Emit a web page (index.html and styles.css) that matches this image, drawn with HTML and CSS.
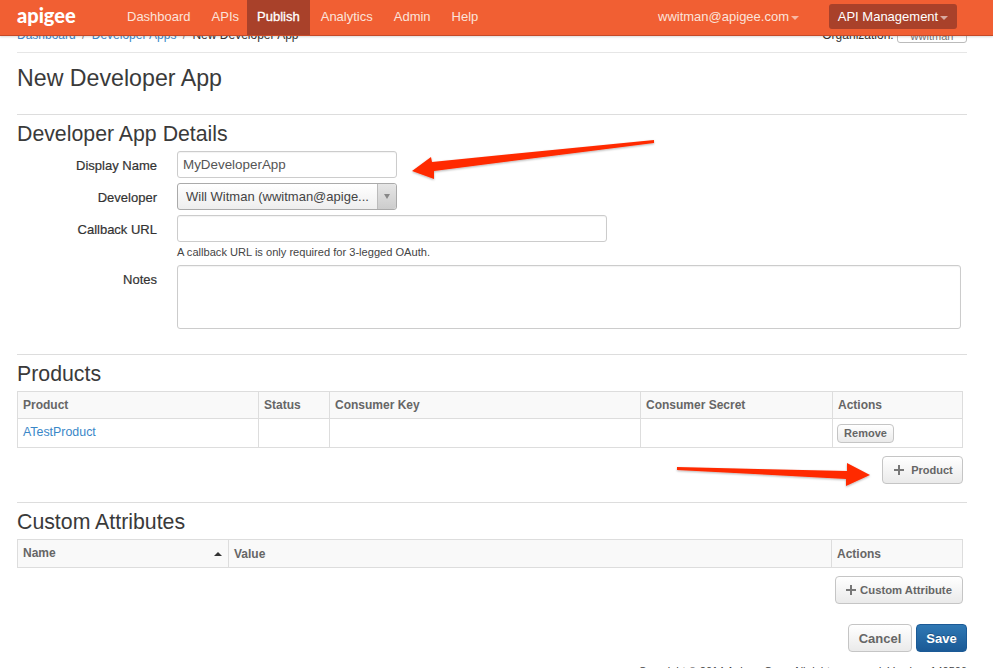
FILE: index.html
```html
<!DOCTYPE html>
<html>

<head>
  <meta charset="utf-8">
  <title>New Developer App</title>
  <link rel="stylesheet" href="styles.css">
</head>

<body>
  <div class="topbar">
    <span class="logo">apigee</span>
    <a class="nav-link first">Dashboard</a>
    <a class="nav-link apis">APIs</a>
    <a class="nav-link active">Publish</a>
    <a class="nav-link">Analytics</a>
    <a class="nav-link">Admin</a>
    <a class="nav-link">Help</a>
    <span class="user">wwitman@apigee.com<i class="caret"></i></span>
    <span class="mgmt">API Management<i class="caret"></i></span>
  </div>

  <div class="page">
    <div class="crumbs">
      <div><a>Dashboard</a><span class="sep">/</span><a>Developer Apps</a><span class="sep">/</span>New Developer App</div>
      <div class="org">Organization: <span class="org-btn">wwitman</span></div>
    </div>

    <h1>New Developer App</h1>

    <div class="section">
      <h2>Developer App Details</h2>
      <div class="form">
        <label>Display Name</label>
        <div class="input short">MyDeveloperApp</div>
        <label>Developer</label>
        <div class="select"><span class="select-text">Will Witman (wwitman@apige...</span><span class="select-arrow"><i></i></span></div>
        <label>Callback URL</label>
        <div>
          <div class="input mid"></div>
          <p class="help">A callback URL is only required for 3-legged OAuth.</p>
        </div>
        <label class="notes-label">Notes</label>
        <div class="input notes"></div>
      </div>
    </div>

    <div class="section products">
      <h2>Products</h2>
      <table>
        <tr>
          <th class="c-product">Product</th>
          <th class="c-status">Status</th>
          <th class="c-key">Consumer Key</th>
          <th class="c-secret">Consumer Secret</th>
          <th>Actions</th>
        </tr>
        <tr class="row">
          <td><a>ATestProduct</a></td>
          <td></td>
          <td></td>
          <td></td>
          <td class="c-actions"><span class="btn small">Remove</span></td>
        </tr>
      </table>
      <div class="right"><span class="btn add product-btn"><svg width="10" height="10" viewBox="0 0 10 10"><path d="M5 0v10M0 5h10" stroke="#777" stroke-width="2" /></svg>Product</span></div>
    </div>

    <div class="section custom">
      <h2>Custom Attributes</h2>
      <table>
        <tr>
          <th class="c-name">Name<i class="sort"></i></th>
          <th class="c-value">Value</th>
          <th>Actions</th>
        </tr>
      </table>
      <div class="right"><span class="btn add attr-btn"><svg width="10" height="10" viewBox="0 0 10 10"><path d="M5 0v10M0 5h10" stroke="#777" stroke-width="2" /></svg>Custom Attribute</span></div>
    </div>

    <div class="actions">
      <span class="btn big">Cancel</span>
      <span class="btn big primary">Save</span>
    </div>

    <div class="footer">Copyright © 2014 Apigee Corp. All rights reserved. Version: 140506</div>
  </div>

  <!-- red callouts drawn over the page -->
  <svg class="callouts" width="993" height="668" viewBox="0 0 993 668">
    <defs>
      <filter id="soft" x="-10%" y="-50%" width="120%" height="200%">
        <feDropShadow dx="0" dy="1" stdDeviation="1" flood-color="#000" flood-opacity="0.3" />
      </filter>
    </defs>
    <path filter="url(#soft)" fill="#ff2a00" d="M412 171 L431 157 L432 162 L654 140 L654 143 L434 171 L434 179 Z" />
    <path filter="url(#soft)" fill="#ff2a00" d="M870 475 L847 463 L847 471 L677 467 L677 470 L846 479 L846 486 Z" />
  </svg>
</body>

</html>
```

FILE: styles.css
```css
html,
body {
  margin: 0;
  height: 668px;
  overflow: hidden;
  background: #fff;
}

body {
  font-family: "Liberation Sans", Arial, sans-serif;
  font-size: 13px;
  color: #333;
}

a {
  color: #3a87c8;
}

/* top bar */
.topbar {
  position: absolute;
  top: 0;
  left: 0;
  right: 0;
  height: 35px;
  display: flex;
  align-items: stretch;
  background: #f15f33;
  border-bottom: 1px solid #c44a28;
  box-shadow: 0 1px 2px rgba(0, 0, 0, 0.15);
  z-index: 2;
  line-height: 34px;
}

.logo {
  width: 100px;
  margin-left: 17px;
  font-family: Lato, sans-serif;
  font-weight: 900;
  font-size: 20px;
  line-height: 31px;
  color: #fff;
}

.nav-link {
  padding: 0 10px;
  margin-right: 1px;
  color: #fbe3da;
}

.nav-link.apis {
  margin-right: -2px;
}

.nav-link.active {
  background: #a9412a;
  color: #fff;
  -webkit-text-stroke: 0.3px #fff;
}

.user {
  margin-left: auto;
  color: #fbe3da;
}

.mgmt {
  align-self: flex-start;
  margin: 4px 36px 0 30px;
  width: 128px;
  height: 25px;
  line-height: 25px;
  text-align: center;
  border-radius: 3px;
  background: #a9412a;
  color: #fff;
}

.caret {
  display: inline-block;
  margin-left: 2px;
  vertical-align: middle;
  border-top: 4px solid rgba(255, 255, 255, 0.55);
  border-left: 4px solid transparent;
  border-right: 4px solid transparent;
}

/* page */
.page {
  width: 950px;
  padding: 28px 26px 0 17px;
}

.crumbs {
  display: flex;
  justify-content: space-between;
  height: 24px;
  line-height: 15px;
  border-bottom: 1px solid #e6e6e6;
  font-size: 12px;
}

.sep {
  display: inline-block;
  width: 16px;
  text-align: center;
  color: #888;
}

.org-btn {
  display: inline-block;
  width: 68px;
  height: 13px;
  border: 1px solid #bbb;
  border-radius: 3px;
  text-align: center;
  color: #777;
  font-size: 11px;
  vertical-align: top;
}

h1 {
  margin: 0 0 11px;
  font-size: 23.2px;
  font-weight: normal;
  line-height: 50px;
  color: #3a3a3a;
}

h2 {
  margin: 0;
  font-size: 21.3px;
  font-weight: normal;
  line-height: 38px;
  height: 36px;
  color: #3a3a3a;
}

.section {
  border-top: 1px solid #ddd;
}

/* form */
.form {
  display: grid;
  grid-template-columns: 140px 1fr;
  column-gap: 20px;
  row-gap: 5px;
  height: 203px;
  align-content: start;
}

label {
  box-sizing: border-box;
  height: 27px;
  padding-top: 1px;
  text-align: right;
  line-height: 27px;
  color: #333;
  -webkit-text-stroke: 0.2px #333;
}

.notes-label {
  line-height: 28px;
}

.input {
  box-sizing: border-box;
  height: 27px;
  padding: 0 5px;
  line-height: 26px;
  font-size: 13.4px;
  color: #555;
  background: #fff;
  border: 1px solid #ccc;
  border-radius: 3px;
  box-shadow: inset 0 1px 1px rgba(0, 0, 0, 0.05);
}

.short {
  width: 220px;
}

.mid {
  width: 430px;
}

.notes {
  width: 784px;
  height: 64px;
}

.help {
  margin: 3px 0 1px;
  font-size: 11.1px;
  line-height: 14px;
  color: #444;
}

.select {
  box-sizing: border-box;
  display: flex;
  width: 220px;
  height: 27px;
  line-height: 25px;
  border: 1px solid #aaa;
  border-radius: 3px;
  background: linear-gradient(#fff, #eee);
  color: #444;
}

.select-text {
  flex: 1;
  padding-left: 8px;
  white-space: nowrap;
}

.select-arrow {
  width: 18px;
  display: flex;
  align-items: center;
  justify-content: center;
  border-left: 1px solid #bbb;
  background: linear-gradient(#e6e6e6, #ccc);
  border-radius: 0 3px 3px 0;
}

.select-arrow i {
  border-top: 5px solid #888;
  border-left: 3px solid transparent;
  border-right: 3px solid transparent;
}

/* tables */
table {
  width: 946px;
  table-layout: fixed;
  border-collapse: collapse;
  border: 1px solid #ddd;
}

th,
td {
  box-sizing: border-box;
  padding: 0 5px;
  text-align: left;
  border: 1px solid #ddd;
}

th {
  height: 27px;
  background: #f9f9f9;
  font-size: 12px;
  color: #666;
}

td {
  height: 29px;
  padding-bottom: 2px;
  font-size: 12.4px;
}

.c-actions {
  padding: 0 4px;
}

.c-product {
  width: 241px;
}

.c-status {
  width: 71px;
}

.c-key {
  width: 311px;
}

.c-secret {
  width: 192px;
}

.c-name {
  width: 211px;
  padding-bottom: 2px;
  position: relative;
}

.c-value {
  width: 603px;
}

.custom th {
  height: 28px;
}

.sort {
  position: absolute;
  right: 6px;
  top: 12px;
  border-bottom: 4px solid #333;
  border-left: 4px solid transparent;
  border-right: 4px solid transparent;
}

/* buttons */
.btn {
  box-sizing: border-box;
  display: inline-flex;
  align-items: center;
  justify-content: center;
  border: 1px solid #c5c5c5;
  border-radius: 4px;
  background: linear-gradient(#fff, #eaeaea);
  font-weight: bold;
  color: #666;
  font-size: 11px;
}

.small {
  width: 57px;
  height: 19px;
}

.right {
  display: flex;
  justify-content: flex-end;
  width: 946px;
}

.product-btn {
  width: 81px;
  height: 28px;
  margin: 8px 0 18px;
  padding-left: 2px;
}

.product-btn svg {
  margin-right: 7px;
}

.attr-btn {
  width: 128px;
  height: 28px;
  margin-top: 8px;
  font-size: 11.3px;
}

.attr-btn svg {
  margin-right: 4px;
}

.actions {
  display: flex;
  justify-content: flex-end;
  gap: 4px;
  margin-top: 20px;
}

.big {
  width: 64px;
  height: 28px;
  font-size: 13px;
}

.primary {
  width: 51px;
  background: linear-gradient(#2f78b4, #1b5a96);
  border-color: #1b5a96;
  color: #fff;
  text-shadow: 0 -1px 0 rgba(0, 0, 0, 0.25);
}

.footer {
  margin-top: 12px;
  font-size: 11px;
  line-height: 14px;
  text-align: right;
  color: #444;
}

/* callouts */
.callouts {
  position: absolute;
  top: 0;
  left: 0;
  z-index: 3;
  pointer-events: none;
}
```
